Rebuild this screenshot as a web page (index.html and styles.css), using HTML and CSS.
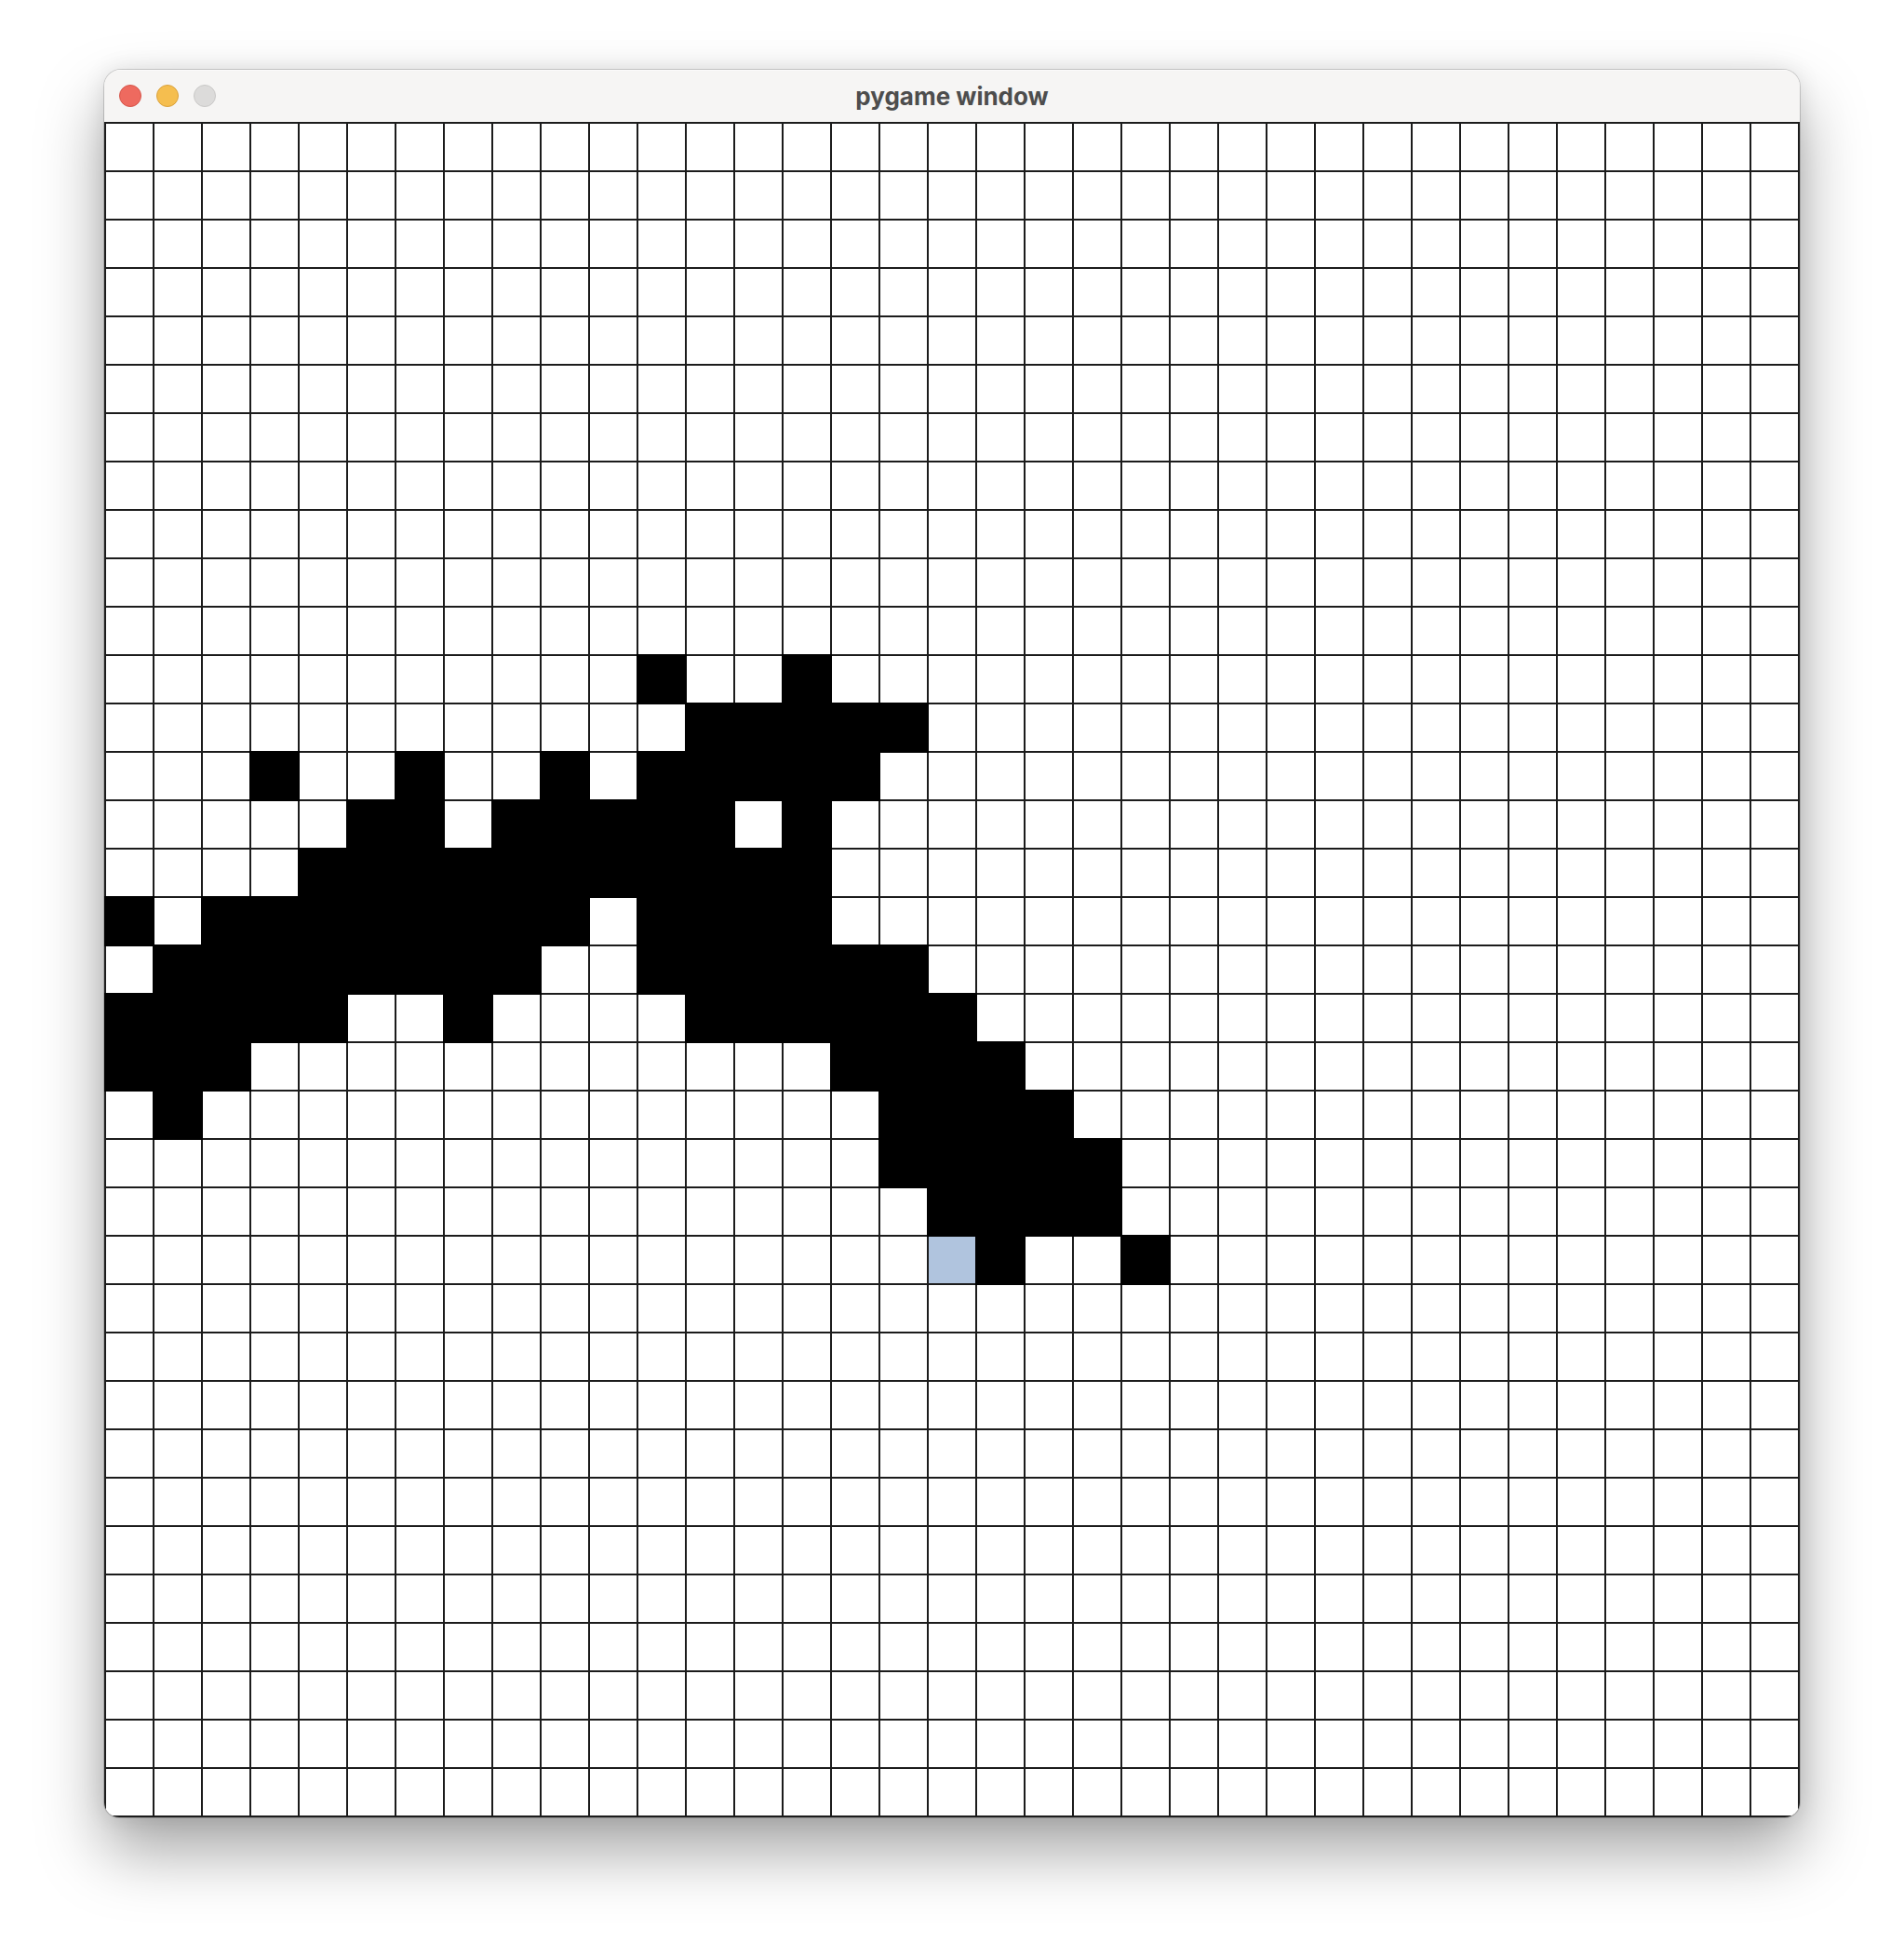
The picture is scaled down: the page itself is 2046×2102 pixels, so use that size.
FILE: index.html
```html
<!DOCTYPE html>
<html lang="en">
<head>
<meta charset="utf-8">
<title>pygame window</title>
<link rel="stylesheet" href="styles.css">
</head>
<body>
<div class="stage">
  <div class="window">
    <div class="titlebar">
      <div class="lights">
        <span class="light close"></span>
        <span class="light min"></span>
        <span class="light max"></span>
      </div>
      <div class="title">pygame window</div>
    </div>
    <div class="board">
<i></i><i></i><i></i><i></i><i></i><i></i><i></i><i></i><i></i><i></i><i></i><i></i><i></i><i></i><i></i><i></i><i></i><i></i><i></i><i></i><i></i><i></i><i></i><i></i><i></i><i></i><i></i><i></i><i></i><i></i><i></i><i></i><i></i><i></i><i></i>
<i></i><i></i><i></i><i></i><i></i><i></i><i></i><i></i><i></i><i></i><i></i><i></i><i></i><i></i><i></i><i></i><i></i><i></i><i></i><i></i><i></i><i></i><i></i><i></i><i></i><i></i><i></i><i></i><i></i><i></i><i></i><i></i><i></i><i></i><i></i>
<i></i><i></i><i></i><i></i><i></i><i></i><i></i><i></i><i></i><i></i><i></i><i></i><i></i><i></i><i></i><i></i><i></i><i></i><i></i><i></i><i></i><i></i><i></i><i></i><i></i><i></i><i></i><i></i><i></i><i></i><i></i><i></i><i></i><i></i><i></i>
<i></i><i></i><i></i><i></i><i></i><i></i><i></i><i></i><i></i><i></i><i></i><i></i><i></i><i></i><i></i><i></i><i></i><i></i><i></i><i></i><i></i><i></i><i></i><i></i><i></i><i></i><i></i><i></i><i></i><i></i><i></i><i></i><i></i><i></i><i></i>
<i></i><i></i><i></i><i></i><i></i><i></i><i></i><i></i><i></i><i></i><i></i><i></i><i></i><i></i><i></i><i></i><i></i><i></i><i></i><i></i><i></i><i></i><i></i><i></i><i></i><i></i><i></i><i></i><i></i><i></i><i></i><i></i><i></i><i></i><i></i>
<i></i><i></i><i></i><i></i><i></i><i></i><i></i><i></i><i></i><i></i><i></i><i></i><i></i><i></i><i></i><i></i><i></i><i></i><i></i><i></i><i></i><i></i><i></i><i></i><i></i><i></i><i></i><i></i><i></i><i></i><i></i><i></i><i></i><i></i><i></i>
<i></i><i></i><i></i><i></i><i></i><i></i><i></i><i></i><i></i><i></i><i></i><i></i><i></i><i></i><i></i><i></i><i></i><i></i><i></i><i></i><i></i><i></i><i></i><i></i><i></i><i></i><i></i><i></i><i></i><i></i><i></i><i></i><i></i><i></i><i></i>
<i></i><i></i><i></i><i></i><i></i><i></i><i></i><i></i><i></i><i></i><i></i><i></i><i></i><i></i><i></i><i></i><i></i><i></i><i></i><i></i><i></i><i></i><i></i><i></i><i></i><i></i><i></i><i></i><i></i><i></i><i></i><i></i><i></i><i></i><i></i>
<i></i><i></i><i></i><i></i><i></i><i></i><i></i><i></i><i></i><i></i><i></i><i></i><i></i><i></i><i></i><i></i><i></i><i></i><i></i><i></i><i></i><i></i><i></i><i></i><i></i><i></i><i></i><i></i><i></i><i></i><i></i><i></i><i></i><i></i><i></i>
<i></i><i></i><i></i><i></i><i></i><i></i><i></i><i></i><i></i><i></i><i></i><i></i><i></i><i></i><i></i><i></i><i></i><i></i><i></i><i></i><i></i><i></i><i></i><i></i><i></i><i></i><i></i><i></i><i></i><i></i><i></i><i></i><i></i><i></i><i></i>
<i></i><i></i><i></i><i></i><i></i><i></i><i></i><i></i><i></i><i></i><i></i><i></i><i></i><i></i><i></i><i></i><i></i><i></i><i></i><i></i><i></i><i></i><i></i><i></i><i></i><i></i><i></i><i></i><i></i><i></i><i></i><i></i><i></i><i></i><i></i>
<i></i><i></i><i></i><i></i><i></i><i></i><i></i><i></i><i></i><i></i><i></i><i class="k"></i><i></i><i></i><i class="k"></i><i></i><i></i><i></i><i></i><i></i><i></i><i></i><i></i><i></i><i></i><i></i><i></i><i></i><i></i><i></i><i></i><i></i><i></i><i></i><i></i>
<i></i><i></i><i></i><i></i><i></i><i></i><i></i><i></i><i></i><i></i><i></i><i></i><i class="k"></i><i class="k"></i><i class="k"></i><i class="k"></i><i class="k"></i><i></i><i></i><i></i><i></i><i></i><i></i><i></i><i></i><i></i><i></i><i></i><i></i><i></i><i></i><i></i><i></i><i></i><i></i>
<i></i><i></i><i></i><i class="k"></i><i></i><i></i><i class="k"></i><i></i><i></i><i class="k"></i><i></i><i class="k"></i><i class="k"></i><i class="k"></i><i class="k"></i><i class="k"></i><i></i><i></i><i></i><i></i><i></i><i></i><i></i><i></i><i></i><i></i><i></i><i></i><i></i><i></i><i></i><i></i><i></i><i></i><i></i>
<i></i><i></i><i></i><i></i><i></i><i class="k"></i><i class="k"></i><i></i><i class="k"></i><i class="k"></i><i class="k"></i><i class="k"></i><i class="k"></i><i></i><i class="k"></i><i></i><i></i><i></i><i></i><i></i><i></i><i></i><i></i><i></i><i></i><i></i><i></i><i></i><i></i><i></i><i></i><i></i><i></i><i></i><i></i>
<i></i><i></i><i></i><i></i><i class="k"></i><i class="k"></i><i class="k"></i><i class="k"></i><i class="k"></i><i class="k"></i><i class="k"></i><i class="k"></i><i class="k"></i><i class="k"></i><i class="k"></i><i></i><i></i><i></i><i></i><i></i><i></i><i></i><i></i><i></i><i></i><i></i><i></i><i></i><i></i><i></i><i></i><i></i><i></i><i></i><i></i>
<i class="k"></i><i></i><i class="k"></i><i class="k"></i><i class="k"></i><i class="k"></i><i class="k"></i><i class="k"></i><i class="k"></i><i class="k"></i><i></i><i class="k"></i><i class="k"></i><i class="k"></i><i class="k"></i><i></i><i></i><i></i><i></i><i></i><i></i><i></i><i></i><i></i><i></i><i></i><i></i><i></i><i></i><i></i><i></i><i></i><i></i><i></i><i></i>
<i></i><i class="k"></i><i class="k"></i><i class="k"></i><i class="k"></i><i class="k"></i><i class="k"></i><i class="k"></i><i class="k"></i><i></i><i></i><i class="k"></i><i class="k"></i><i class="k"></i><i class="k"></i><i class="k"></i><i class="k"></i><i></i><i></i><i></i><i></i><i></i><i></i><i></i><i></i><i></i><i></i><i></i><i></i><i></i><i></i><i></i><i></i><i></i><i></i>
<i class="k"></i><i class="k"></i><i class="k"></i><i class="k"></i><i class="k"></i><i></i><i></i><i class="k"></i><i></i><i></i><i></i><i></i><i class="k"></i><i class="k"></i><i class="k"></i><i class="k"></i><i class="k"></i><i class="k"></i><i></i><i></i><i></i><i></i><i></i><i></i><i></i><i></i><i></i><i></i><i></i><i></i><i></i><i></i><i></i><i></i><i></i>
<i class="k"></i><i class="k"></i><i class="k"></i><i></i><i></i><i></i><i></i><i></i><i></i><i></i><i></i><i></i><i></i><i></i><i></i><i class="k"></i><i class="k"></i><i class="k"></i><i class="k"></i><i></i><i></i><i></i><i></i><i></i><i></i><i></i><i></i><i></i><i></i><i></i><i></i><i></i><i></i><i></i><i></i>
<i></i><i class="k"></i><i></i><i></i><i></i><i></i><i></i><i></i><i></i><i></i><i></i><i></i><i></i><i></i><i></i><i></i><i class="k"></i><i class="k"></i><i class="k"></i><i class="k"></i><i></i><i></i><i></i><i></i><i></i><i></i><i></i><i></i><i></i><i></i><i></i><i></i><i></i><i></i><i></i>
<i></i><i></i><i></i><i></i><i></i><i></i><i></i><i></i><i></i><i></i><i></i><i></i><i></i><i></i><i></i><i></i><i class="k"></i><i class="k"></i><i class="k"></i><i class="k"></i><i class="k"></i><i></i><i></i><i></i><i></i><i></i><i></i><i></i><i></i><i></i><i></i><i></i><i></i><i></i><i></i>
<i></i><i></i><i></i><i></i><i></i><i></i><i></i><i></i><i></i><i></i><i></i><i></i><i></i><i></i><i></i><i></i><i></i><i class="k"></i><i class="k"></i><i class="k"></i><i class="k"></i><i></i><i></i><i></i><i></i><i></i><i></i><i></i><i></i><i></i><i></i><i></i><i></i><i></i><i></i>
<i></i><i></i><i></i><i></i><i></i><i></i><i></i><i></i><i></i><i></i><i></i><i></i><i></i><i></i><i></i><i></i><i></i><i class="s"></i><i class="k"></i><i></i><i></i><i class="k"></i><i></i><i></i><i></i><i></i><i></i><i></i><i></i><i></i><i></i><i></i><i></i><i></i><i></i>
<i></i><i></i><i></i><i></i><i></i><i></i><i></i><i></i><i></i><i></i><i></i><i></i><i></i><i></i><i></i><i></i><i></i><i></i><i></i><i></i><i></i><i></i><i></i><i></i><i></i><i></i><i></i><i></i><i></i><i></i><i></i><i></i><i></i><i></i><i></i>
<i></i><i></i><i></i><i></i><i></i><i></i><i></i><i></i><i></i><i></i><i></i><i></i><i></i><i></i><i></i><i></i><i></i><i></i><i></i><i></i><i></i><i></i><i></i><i></i><i></i><i></i><i></i><i></i><i></i><i></i><i></i><i></i><i></i><i></i><i></i>
<i></i><i></i><i></i><i></i><i></i><i></i><i></i><i></i><i></i><i></i><i></i><i></i><i></i><i></i><i></i><i></i><i></i><i></i><i></i><i></i><i></i><i></i><i></i><i></i><i></i><i></i><i></i><i></i><i></i><i></i><i></i><i></i><i></i><i></i><i></i>
<i></i><i></i><i></i><i></i><i></i><i></i><i></i><i></i><i></i><i></i><i></i><i></i><i></i><i></i><i></i><i></i><i></i><i></i><i></i><i></i><i></i><i></i><i></i><i></i><i></i><i></i><i></i><i></i><i></i><i></i><i></i><i></i><i></i><i></i><i></i>
<i></i><i></i><i></i><i></i><i></i><i></i><i></i><i></i><i></i><i></i><i></i><i></i><i></i><i></i><i></i><i></i><i></i><i></i><i></i><i></i><i></i><i></i><i></i><i></i><i></i><i></i><i></i><i></i><i></i><i></i><i></i><i></i><i></i><i></i><i></i>
<i></i><i></i><i></i><i></i><i></i><i></i><i></i><i></i><i></i><i></i><i></i><i></i><i></i><i></i><i></i><i></i><i></i><i></i><i></i><i></i><i></i><i></i><i></i><i></i><i></i><i></i><i></i><i></i><i></i><i></i><i></i><i></i><i></i><i></i><i></i>
<i></i><i></i><i></i><i></i><i></i><i></i><i></i><i></i><i></i><i></i><i></i><i></i><i></i><i></i><i></i><i></i><i></i><i></i><i></i><i></i><i></i><i></i><i></i><i></i><i></i><i></i><i></i><i></i><i></i><i></i><i></i><i></i><i></i><i></i><i></i>
<i></i><i></i><i></i><i></i><i></i><i></i><i></i><i></i><i></i><i></i><i></i><i></i><i></i><i></i><i></i><i></i><i></i><i></i><i></i><i></i><i></i><i></i><i></i><i></i><i></i><i></i><i></i><i></i><i></i><i></i><i></i><i></i><i></i><i></i><i></i>
<i></i><i></i><i></i><i></i><i></i><i></i><i></i><i></i><i></i><i></i><i></i><i></i><i></i><i></i><i></i><i></i><i></i><i></i><i></i><i></i><i></i><i></i><i></i><i></i><i></i><i></i><i></i><i></i><i></i><i></i><i></i><i></i><i></i><i></i><i></i>
<i></i><i></i><i></i><i></i><i></i><i></i><i></i><i></i><i></i><i></i><i></i><i></i><i></i><i></i><i></i><i></i><i></i><i></i><i></i><i></i><i></i><i></i><i></i><i></i><i></i><i></i><i></i><i></i><i></i><i></i><i></i><i></i><i></i><i></i><i></i>
<i></i><i></i><i></i><i></i><i></i><i></i><i></i><i></i><i></i><i></i><i></i><i></i><i></i><i></i><i></i><i></i><i></i><i></i><i></i><i></i><i></i><i></i><i></i><i></i><i></i><i></i><i></i><i></i><i></i><i></i><i></i><i></i><i></i><i></i><i></i>
    </div>
  </div>
</div>
</body>
</html>
```

FILE: styles.css
```css
html, body {
  margin: 0;
  padding: 0;
  background: #ffffff;
}

.stage {
  padding: 75px 0 0 112px;
  height: 2102px;
  box-sizing: border-box;
}

.window {
  width: 1822px;
  border-radius: 18px 18px 16px 16px;
  overflow: hidden;
  background: #f6f5f4;
  box-shadow:
    0 0 0 1px rgba(0, 0, 0, 0.16),
    0 0 24px rgba(0, 0, 0, 0.10),
    0 36px 70px rgba(0, 0, 0, 0.36);
}

.titlebar {
  position: relative;
  height: 56px;
  display: flex;
  align-items: center;
  background: #f6f5f4;
  box-shadow: inset 0 1px 0 rgba(255, 255, 255, 0.6);
}

.lights {
  display: flex;
  gap: 16px;
  padding-left: 16px;
}

.light {
  width: 24px;
  height: 24px;
  border-radius: 50%;
  box-sizing: border-box;
}

.light.close {
  background: #ee6a5f;
  border: 1px solid #d5554a;
}

.light.min {
  background: #f5be4f;
  border: 1px solid #d9a23e;
}

.light.max {
  background: #dcdbda;
  border: 1px solid #c9c8c7;
}

.title {
  position: absolute;
  left: 0;
  right: 0;
  top: 0;
  bottom: 0;
  display: flex;
  align-items: center;
  justify-content: center;
  font-family: Inter, "Liberation Sans", sans-serif;
  font-weight: 700;
  font-size: 26px;
  color: #4d4d4d;
  pointer-events: none;
}

.board {
  display: grid;
  grid-template-columns: repeat(35, 50px);
  grid-auto-rows: 50px;
  gap: 2px;
  padding: 2px;
  background: #1c1c1c;
}

.board i {
  display: block;
  background: #ffffff;
}

.board i.k {
  background: #000000;
  box-shadow: 0 0 0 2px #000000;
}

.board i.s {
  background: #b0c4de;
}
```
